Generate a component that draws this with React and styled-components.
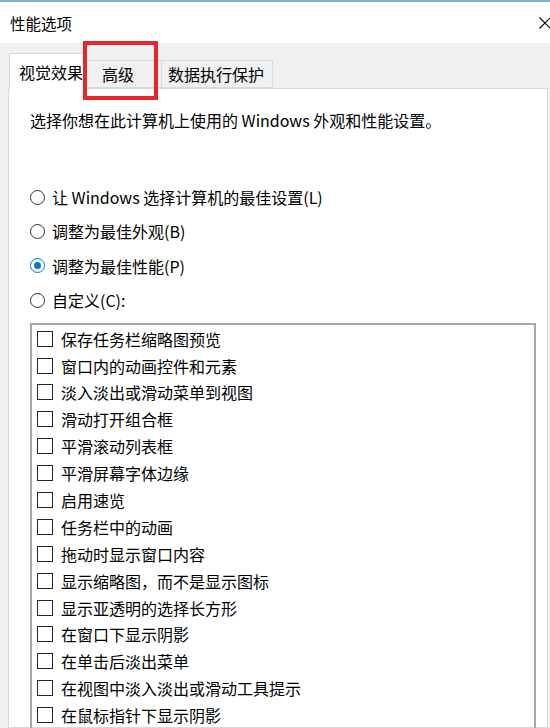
import React from "react";
import styled, { createGlobalStyle } from "styled-components";

const GlobalStyle = createGlobalStyle`
  html, body { margin: 0; padding: 0; background: #f0f0f0; overflow: hidden; }
  * { box-sizing: border-box; }
`;

const FONT = `"Noto Sans CJK SC", "Microsoft YaHei", sans-serif`;

const Window = styled.div`
  position: relative;
  width: 550px;
  height: 728px;
  overflow: hidden;
  background: #f0f0f0;
  border-top: 2px solid #7eaedc;
  display: flex;
  flex-direction: column;
  font-family: ${FONT};
  color: #000;
`;

const TitleBar = styled.div`
  height: 41px;
  flex: none;
  background: #fff;
  display: flex;
  align-items: center;
  justify-content: space-between;
  padding-left: 10px;
`;

const Title = styled.span`
  font-size: 15.5px;
  line-height: 20px;
`;

const Close = styled.span`
  display: flex;
  width: 12px;
  height: 12px;
  margin-right: -1px;
`;

const Body = styled.div`
  flex: 1;
  display: flex;
  flex-direction: column;
  padding: 0 2px 0 8px;
  min-height: 0;
`;

const TabStrip = styled.div`
  height: 45px;
  flex: none;
  display: flex;
  align-items: flex-end;
  padding-left: 1px;
`;

const Tab = styled.div`
  position: relative;
  display: flex;
  align-items: center;
  height: ${(p) => (p.$active ? "36px" : "28px")};
  margin-bottom: ${(p) => (p.$active ? "-1px" : "0")};
  margin-left: ${(p) => (p.$first ? "0" : "-1px")};
  z-index: ${(p) => (p.$active ? 2 : 1)};
  padding: ${(p) => p.$pad};
  background: ${(p) => (p.$active ? "#fff" : "#f0f0f0")};
  border: 1px solid #d9d9d9;
  border-bottom: ${(p) => (p.$active ? "none" : "1px solid #d9d9d9")};
  font-size: 16px;
  line-height: 20px;
  white-space: nowrap;
`;

const Page = styled.div`
  flex: 1;
  background: #fff;
  border: 1px solid #d9d9d9;
  padding: 21px 11px 0 21px;
  display: flex;
  flex-direction: column;
  min-height: 0;
`;

const Description = styled.div`
  font-size: 16px;
  line-height: 20px;
  white-space: nowrap;
`;

const RadioGroup = styled.div`
  margin-top: 50px;
  display: flex;
  flex-direction: column;
`;

const RadioRow = styled.div`
  height: 34.3px;
  display: flex;
  align-items: center;
  gap: 7px;
  font-size: 16px;
  line-height: 20px;
  white-space: nowrap;
`;

const RadioCircle = styled.span`
  flex: none;
  width: 15px;
  height: 15px;
  border-radius: 50%;
  border: 1px solid ${(p) => (p.$checked ? "#0078d7" : "#333")};
  display: flex;
  align-items: center;
  justify-content: center;
  &::after {
    content: "";
    display: ${(p) => (p.$checked ? "block" : "none")};
    width: 7px;
    height: 7px;
    border-radius: 50%;
    background: #0078d7;
  }
`;

const ListBox = styled.div`
  margin-top: 6px;
  height: 430px;
  flex: none;
  border: 2px solid #a9a9a9;
  padding: 0 0 0 5px;
  display: flex;
  flex-direction: column;
`;

const CheckRow = styled.div`
  height: 26.9px;
  flex: none;
  display: flex;
  align-items: center;
  gap: 8px;
  font-size: 16px;
  line-height: 20px;
  white-space: nowrap;
`;

const CheckBox = styled.span`
  flex: none;
  width: 16px;
  height: 16px;
  border: 1px solid #262626;
  background: #fff;
`;

const Highlight = styled.div`
  position: absolute;
  left: 83px;
  top: 39px;
  width: 75px;
  height: 59px;
  border: 4px solid #e5262b;
  pointer-events: none;
  z-index: 5;
`;

const radios = [
  { label: "让 Windows 选择计算机的最佳设置(L)", checked: false },
  { label: "调整为最佳外观(B)", checked: false },
  { label: "调整为最佳性能(P)", checked: true },
  { label: "自定义(C):", checked: false },
];

const items = [
  "保存任务栏缩略图预览",
  "窗口内的动画控件和元素",
  "淡入淡出或滑动菜单到视图",
  "滑动打开组合框",
  "平滑滚动列表框",
  "平滑屏幕字体边缘",
  "启用速览",
  "任务栏中的动画",
  "拖动时显示窗口内容",
  "显示缩略图，而不是显示图标",
  "显示亚透明的选择长方形",
  "在窗口下显示阴影",
  "在单击后淡出菜单",
  "在视图中淡入淡出或滑动工具提示",
  "在鼠标指针下显示阴影",
];

export default function App() {
  return (
    <>
      <GlobalStyle />
      <Window>
        <TitleBar>
          <Title>性能选项</Title>
          <Close>
            <svg width="12" height="12" viewBox="0 0 12 12">
              <path d="M0.5 0.5 L11.5 11.5 M11.5 0.5 L0.5 11.5" stroke="#111" strokeWidth="1.2" fill="none" />
            </svg>
          </Close>
        </TitleBar>
        <Body>
          <TabStrip>
            <Tab $active $first $pad="0 3px 0 9px">视觉效果</Tab>
            <Tab $pad="0 27px 0 15px">高级</Tab>
            <Tab $pad="0 8px 0 6px">数据执行保护</Tab>
          </TabStrip>
          <Page>
            <Description>选择你想在此计算机上使用的 Windows 外观和性能设置。</Description>
            <RadioGroup>
              {radios.map((r) => (
                <RadioRow key={r.label}>
                  <RadioCircle $checked={r.checked} />
                  <span>{r.label}</span>
                </RadioRow>
              ))}
            </RadioGroup>
            <ListBox>
              {items.map((t) => (
                <CheckRow key={t}>
                  <CheckBox />
                  <span>{t}</span>
                </CheckRow>
              ))}
            </ListBox>
          </Page>
        </Body>
        <Highlight />
      </Window>
    </>
  );
}
